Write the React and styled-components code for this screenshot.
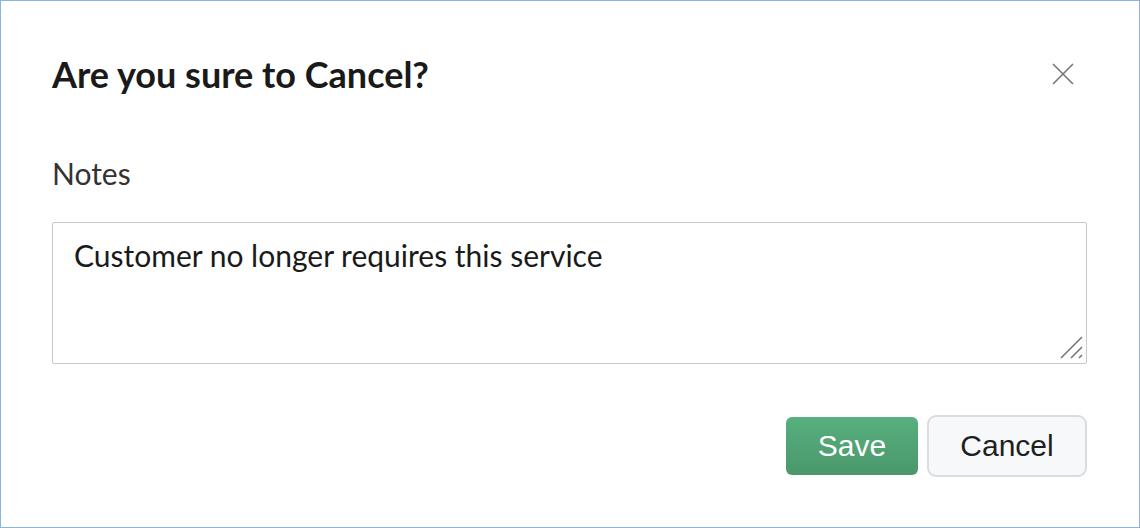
import React from "react";
import styled, { createGlobalStyle } from "styled-components";

const Global = createGlobalStyle`
  html, body { margin: 0; padding: 0; background: #fff; }
  * { box-sizing: border-box; }
`;

const Frame = styled.div`
  width: 1140px;
  height: 528px;
  border: 1px solid #8db4de;
  background: #fff;
  font-family: Lato, "Noto Sans", sans-serif;
  padding: 0 52px 0 51px;
  display: flex;
  flex-direction: column;
`;

const Header = styled.div`
  display: flex;
  align-items: center;
  justify-content: space-between;
  height: 40px;
  margin-top: 53px;
`;

const Title = styled.h1`
  margin: 0;
  font-size: 36px;
  font-weight: 700;
  color: #1a1a1a;
  line-height: 40px;
`;

const CloseButton = styled.button`
  border: none;
  background: none;
  padding: 0;
  margin-right: 12px;
  width: 24px;
  height: 24px;
  display: flex;
  align-items: center;
  justify-content: center;
  cursor: pointer;
`;

const Label = styled.div`
  margin-top: 63px;
  font-size: 30px;
  color: #333;
  line-height: 32px;
`;

const NotesBox = styled.div`
  position: relative;
  margin-top: 33px;
  height: 142px;
  border: 1px solid #c9c9c9;
  border-radius: 2px;
  padding: 16px 21px;
  font-size: 30px;
  line-height: 32px;
  color: #1a1a1a;
`;

const Grip = styled.svg`
  position: absolute;
  right: 2px;
  bottom: 2px;
`;

const Actions = styled.div`
  display: flex;
  justify-content: flex-end;
  align-items: center;
  gap: 9px;
  margin-top: 51px;
  height: 62px;
`;

const Button = styled.button`
  font-family: "Liberation Sans", Arial, sans-serif;
  font-size: 30px;
  border-radius: ${(p) => (p.$primary ? "6px" : "9px")};
  height: ${(p) => (p.$primary ? "58px" : "62px")};
  width: ${(p) => (p.$primary ? "132px" : "160px")};
  color: ${(p) => (p.$primary ? "#fff" : "#1f1f1f")};
  background: ${(p) =>
    p.$primary ? "linear-gradient(#57b07e, #4a976b)" : "#f7f8fa"};
  border: ${(p) => (p.$primary ? "none" : "2px solid #d9dce0")};
  cursor: pointer;
  padding: 0;
`;

export default function App() {
  return (
    <>
      <Global />
      <Frame>
        <Header>
          <Title>Are you sure to Cancel?</Title>
          <CloseButton aria-label="Close">
            <svg width="22" height="22" viewBox="0 0 22 22">
              <path d="M1 1 L21 21 M21 1 L1 21" stroke="#777" strokeWidth="1.6" />
            </svg>
          </CloseButton>
        </Header>
        <Label>Notes</Label>
        <NotesBox>
          Customer no longer requires this service
          <Grip width="26" height="26" viewBox="0 0 26 26">
            <path d="M3 23 L24 2 M13 23 L24 12 M21 23 L24 20" stroke="#777" strokeWidth="1.6" />
          </Grip>
        </NotesBox>
        <Actions>
          <Button $primary>Save</Button>
          <Button>Cancel</Button>
        </Actions>
      </Frame>
    </>
  );
}
